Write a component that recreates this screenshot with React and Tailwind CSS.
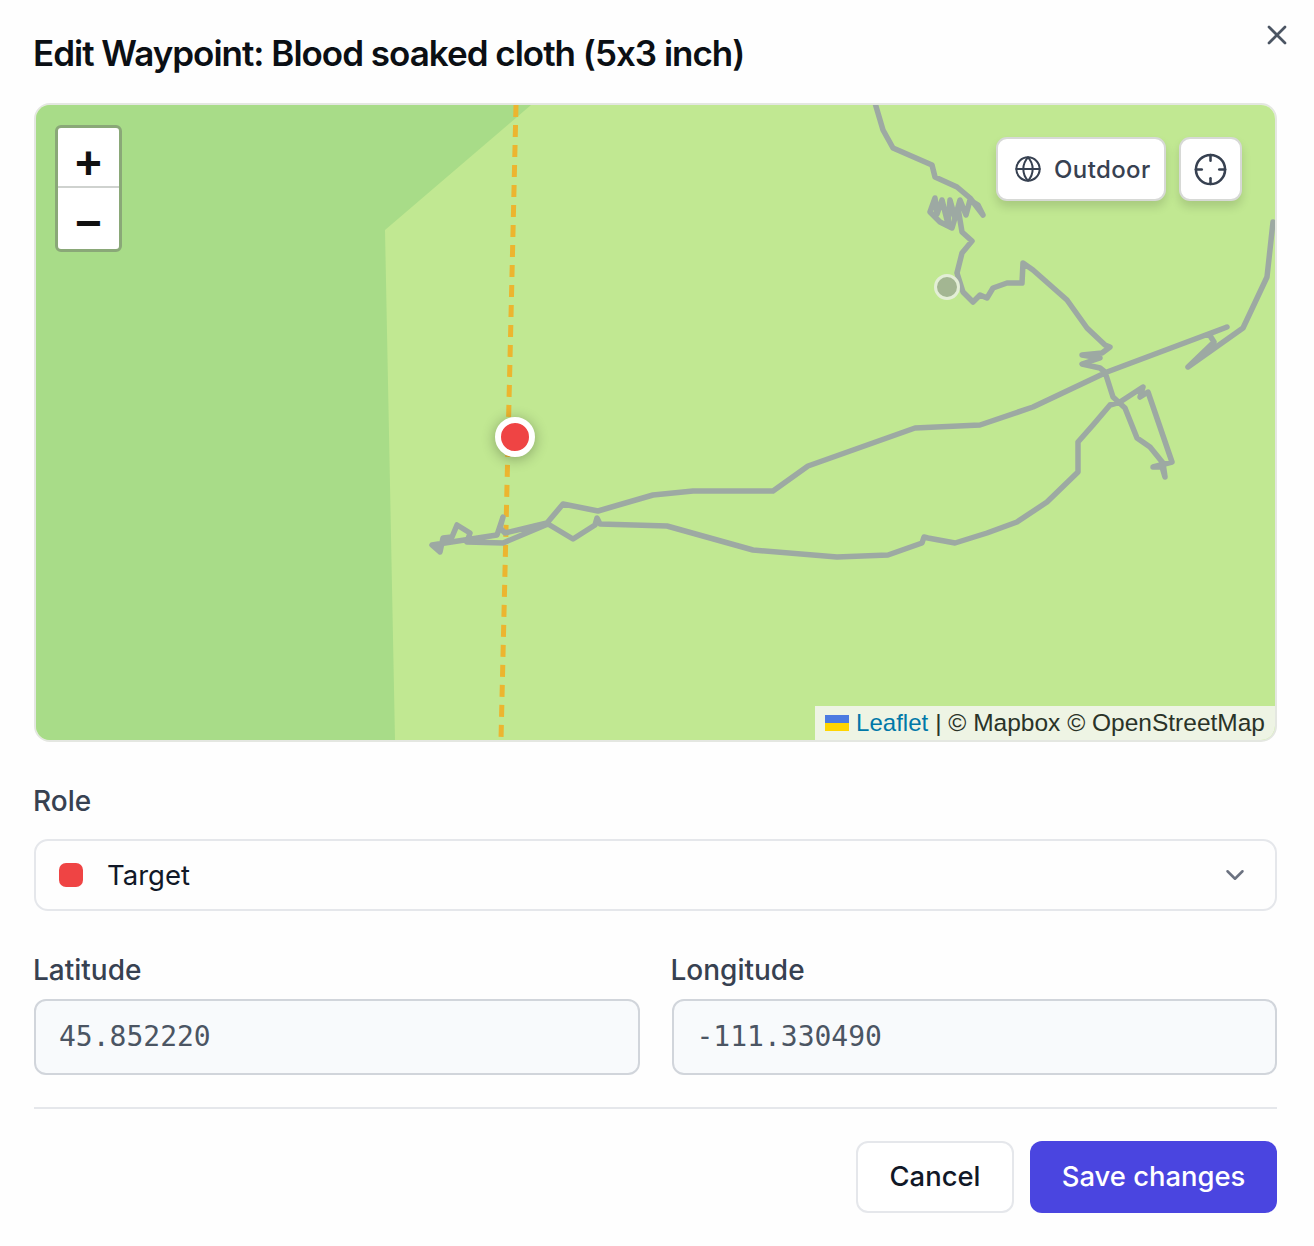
import { X, Globe, Crosshair, ChevronDown } from 'lucide-react';

const INTER = 'font-["Inter",sans-serif]';

const TRACKS = [
  // one trail, drawn from the top of the map to the right edge
  '875,103 883,130 893,148 932,165 935,177 957,187 970,198 983,215 978,205 970,200 966,215 960,200 955,218 950,200 948,224 942,200 937,214 935,198 930,212 940,222 952,228 958,208 962,232 972,241 962,253 957,273 963,292 973,302 980,295 987,298 993,288 1007,283 1022,283 1023,263 1033,270 1067,300 1087,328 1105,345 1110,347 1102,353 1082,355 1100,358 1082,364 1100,368 1105,372 1113,397 1125,408 1137,438 1150,447 1163,463 1165,477 1162,467 1153,467 1172,462 1148,392 1140,397 1143,387 1120,402 1110,405 1093,425 1078,442 1078,472 1047,502 1017,522 987,533 955,543 928,538 924,537 922,543 888,555 837,557 753,550 667,526 600,524 597,518 595,525 573,539 548,524 503,543 467,542 470,533 457,525 452,537 443,538 440,552 432,545 497,535 503,517 500,528 505,533 547,523 563,504 598,511 653,495 693,491 773,491 808,466 915,428 980,425 1033,407 1107,372 1227,327 1209,334 1214,342 1188,367 1243,328 1267,277 1273,222',
];

function MapCanvas() {
  return (
    <svg className="absolute inset-0 w-full h-full" viewBox="36 105 1239 635" preserveAspectRatio="none">
      <rect x="36" y="105" width="1239" height="635" fill="#c1e892" />
      <polygon points="36,105 531,105 385,230 395,740 36,740" fill="#a8dc88" />
      <line x1="516" y1="105" x2="501" y2="740" stroke="#ecb52f" strokeWidth="5" strokeDasharray="12 8" />
      {TRACKS.map((points, i) => (
        <polyline key={i} points={points} fill="none" stroke="#9da9a3" strokeWidth="5.5" strokeLinejoin="round" strokeLinecap="round" />
      ))}
      <circle cx="947" cy="287" r="11.5" fill="#a3b692" stroke="#e3eed6" strokeWidth="3" />
    </svg>
  );
}

export default function App() {
  return (
    <div className={`relative w-[1314px] h-[1246px] bg-[#fefefe] pt-[29px] pl-[34px] pr-[37px] ${INTER}`}>
      <button className="absolute top-[19px] right-[21px] text-[#4b5563]">
        <X size={32} strokeWidth={2} />
      </button>

      <h1 className="text-[35px] leading-[48px] font-semibold tracking-[-1px] text-[#0b0f14] -ml-[1px]">
        Edit Waypoint: Blood soaked cloth (5x3 inch)
      </h1>

      {/* Map */}
      <div className="relative mt-[26px] h-[639px] rounded-[16px] overflow-hidden border-2 border-[#e4e7e1]">
        <MapCanvas />

        <div className="absolute left-[19px] top-[20px] w-[67px] h-[127px] rounded-[6px] border-[3px] border-[#8aa878] bg-white flex flex-col font-['Liberation_Sans',sans-serif] font-bold text-[#111]">
          <div className="h-[60px] pt-[12px] border-b-2 border-[#cfd2cf] flex items-center justify-center text-[46px] leading-none">+</div>
          <div className="flex-1 pt-[9px] flex items-center justify-center text-[46px] leading-none">−</div>
        </div>

        <div className="absolute top-[32px] right-[33px] flex gap-[13px] text-[#374151]">
          <div className="w-[170px] h-[64px] rounded-[11px] bg-white border-2 border-[#d7d9d6] shadow-[0_6px_10px_rgba(0,0,0,0.13)] flex items-center pl-[16px] gap-[12px]">
            <Globe size={28} strokeWidth={1.75} />
            <span className="text-[24px] pt-[2px] font-medium tracking-[0.4px]">Outdoor</span>
          </div>
          <div className="w-[63px] h-[64px] rounded-[11px] bg-white border-2 border-[#d7d9d6] shadow-[0_6px_10px_rgba(0,0,0,0.13)] flex items-center justify-center">
            <Crosshair size={35} strokeWidth={1.75} />
          </div>
        </div>

        {/* Target marker */}
        <div className="absolute left-[459px] top-[312px] w-[40px] h-[40px] rounded-full bg-[#ef4444] border-[6px] border-white shadow-[0_2px_14px_rgba(0,0,0,0.3)]" />

        <div className="absolute right-0 bottom-0 h-[34px] pl-[10px] pr-[10px] bg-[#eef4e4] rounded-br-[14px] flex items-center gap-[7px] text-[24px] leading-none text-[#2a3328] font-['Liberation_Sans',sans-serif]">
          <svg width="24" height="16" viewBox="0 0 12 8">
            <rect width="12" height="4" fill="#4c7be1" />
            <rect y="4" width="12" height="4" fill="#ffd500" />
          </svg>
          <span className="text-[#0078a8]">Leaflet</span>
          <span className="text-[24.5px]">| © Mapbox © OpenStreetMap</span>
        </div>
      </div>

      {/* Role */}
      <label className="block mt-[41px] -ml-[1px] text-[28px] leading-[36px] font-medium text-[#374151]">Role</label>
      <div className="mt-[20px] h-[72px] rounded-[14px] border-2 border-[#e5e7eb] flex items-center pl-[23px] pr-[25px]">
        <span className="w-[24px] h-[24px] rounded-[7px] bg-[#ef4444]" />
        <span className="ml-[24px] pt-[1px] text-[27.5px] text-[#111827]">Target</span>
        <ChevronDown size={30} strokeWidth={2} className="ml-auto text-[#6b7280]" />
      </div>

      {/* Coordinates */}
      <div className="mt-[41px] grid grid-cols-2 gap-[32px]">
        {[
          { label: 'Latitude', value: '45.852220' },
          { label: 'Longitude', value: '-111.330490' },
        ].map(f => (
          <div key={f.label}>
            <label className="block -ml-[1px] text-[28px] leading-[36px] font-medium text-[#374151]">{f.label}</label>
            <div className="mt-[11px] h-[76px] rounded-[12px] border-2 border-[#d1d5db] bg-[#f8fafc] flex items-center pl-[23px] text-[28px] text-[#4b5563] font-['DejaVu_Sans_Mono',monospace]">
              {f.value}
            </div>
          </div>
        ))}
      </div>

      <div className="mt-[32px] h-[2px] bg-[#e5e7eb]" />

      <div className="mt-[32px] flex justify-end gap-[16px]">
        <button className="w-[158px] h-[72px] rounded-[12px] border-2 border-[#e5e7eb] bg-white text-[27.4px] font-medium text-[#111827]">
          Cancel
        </button>
        <button className="w-[247px] h-[72px] rounded-[12px] bg-[#4a45e0] text-[27.4px] font-medium text-white">
          Save changes
        </button>
      </div>
    </div>
  );
}
